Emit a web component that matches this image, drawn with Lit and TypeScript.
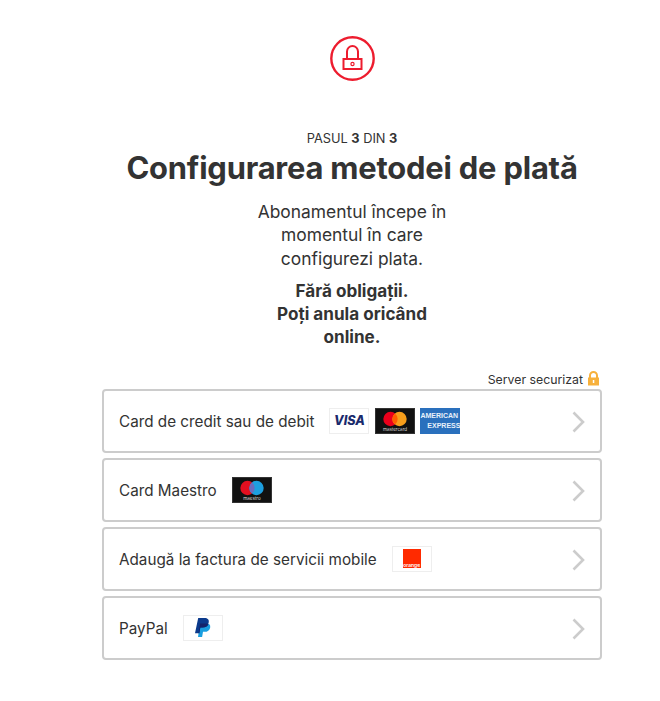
import { LitElement, html, css, svg } from 'lit';
import { customElement } from 'lit/decorators.js';

const logoVisa = html`<span class="logo light"><span class="visa">VISA</span></span>`;

const logoMastercard = html`<span class="logo dark">
  <svg width="38" height="24" viewBox="0 0 38 24">
    <circle cx="14.5" cy="10" r="7.2" fill="#eb001b"></circle>
    <circle cx="23.5" cy="10" r="7.2" fill="#f79e1b"></circle>
    <path d="M19 4.4a7.2 7.2 0 0 1 0 11.2a7.2 7.2 0 0 1 0-11.2z" fill="#ff5f00"></path>
    <text x="19" y="21.5" text-anchor="middle" class="tiny">mastercard</text>
  </svg>
</span>`;

const logoAmex = html`<span class="logo amex">
  <span class="amex-a">AMERICAN</span>
  <span class="amex-b">EXPRESS</span>
</span>`;

const logoMaestro = html`<span class="logo dark">
  <svg width="38" height="24" viewBox="0 0 38 24">
    <circle cx="14.5" cy="10" r="7.2" fill="#e30f20"></circle>
    <circle cx="23.5" cy="10" r="7.2" fill="#1d9fe0"></circle>
    <path d="M19 4.4a7.2 7.2 0 0 1 0 11.2a7.2 7.2 0 0 1 0-11.2z" fill="#6c6bbd"></path>
    <text x="19" y="21.5" text-anchor="middle" class="tiny">maestro</text>
  </svg>
</span>`;

const logoOrange = html`<span class="logo light">
  <span class="orange">orange</span>
</span>`;

const logoPaypal = html`<span class="logo light">
  <svg width="18" height="20" viewBox="0 0 18 20">
    <path d="M6 5.5h6.6c2.6 0 4.1 1.5 3.6 3.9c-.6 3-2.8 4.4-5.4 4.4H9l-.9 5.2H4z" fill="#1a9fe0"></path>
    <path d="M4.2 0h6.4c3 0 4.7 1.6 4.1 4.4c-.7 3.4-3.2 5-6.2 5H6.3l-1 5.8H1z" fill="#0b3a8c"></path>
    <path d="M6 5.5h5.8c1 0 1.9.2 2.6.7c-.7 2.2-3 3.2-5.9 3.2H6.3l-1 5.8H4.6z" fill="#15246b"></path>
  </svg>
</span>`;

const lockRed = svg`
  <circle cx="22.5" cy="22.5" r="21.2" fill="none" stroke="#ed1c2e" stroke-width="2.4"></circle>
  <path d="M17 23v-7.5a5.5 5.5 0 0 1 11 0V23" fill="none" stroke="#ed1c2e" stroke-width="2"></path>
  <rect x="13.5" y="23" width="18" height="10" fill="none" stroke="#ed1c2e" stroke-width="2"></rect>
  <circle cx="22.5" cy="28" r="1.6" fill="none" stroke="#ed1c2e" stroke-width="1.2"></circle>
`;

const rows = [
  { label: 'Card de credit sau de debit', logos: [logoVisa, logoMastercard, logoAmex] },
  { label: 'Card Maestro', logos: [logoMaestro] },
  { label: 'Adaugă la factura de servicii mobile', logos: [logoOrange] },
  { label: 'PayPal', logos: [logoPaypal] },
];

@customElement('app-root')
export class AppRoot extends LitElement {
  static styles = css`
    :host {
      display: block;
      height: 701px;
      background: #fff;
      color: #333;
      font-family: Inter, 'Liberation Sans', sans-serif;
      overflow: hidden;
    }
    .page {
      width: 500px;
      margin-left: 102px;
      padding-top: 36px;
    }
    .head {
      display: flex;
      flex-direction: column;
      align-items: center;
      text-align: center;
    }
    .lock {
      display: block;
      width: 45px;
      height: 45px;
    }
    .step {
      margin-top: 50px;
      font-size: 12.8px;
      line-height: 16px;
    }
    .step b {
      font-weight: 700;
    }
    h1 {
      margin: 2px 0 0;
      font-size: 30.9px;
      line-height: 38px;
      font-weight: 700;
      letter-spacing: -0.2px;
      white-space: nowrap;
    }
    .lead {
      width: 210px;
      margin-top: 13px;
      font-size: 17.4px;
      line-height: 23.3px;
    }
    .strong {
      width: 180px;
      margin-top: 9px;
      font-size: 17.1px;
      line-height: 23.3px;
      font-weight: 700;
    }
    .secure {
      display: flex;
      justify-content: flex-end;
      align-items: center;
      gap: 4px;
      height: 16px;
      margin-top: 23px;
      font-size: 12.3px;
    }
    .secure svg {
      margin: -3px 2px 0 0;
    }
    .list {
      display: flex;
      flex-direction: column;
      gap: 5px;
      margin-top: 1px;
    }
    .row {
      display: flex;
      align-items: center;
      box-sizing: border-box;
      height: 64px;
      padding-left: 15px;
      border: 2px solid #ccc;
      border-radius: 4px;
      font-size: 15.25px;
    }
    .label {
      padding-top: 2px;
    }
    .logos {
      display: flex;
      gap: 5.5px;
      margin-left: 15px;
    }
    .logo {
      display: flex;
      align-items: center;
      justify-content: center;
      box-sizing: border-box;
      width: 40px;
      height: 26px;
      overflow: hidden;
    }
    .light {
      border: 1px solid #eee;
      background: #fff;
    }
    .dark {
      background: #111;
      border: 1px solid #333;
    }
    .tiny {
      font-size: 4.5px;
      fill: #ddd;
    }
    .visa {
      color: #1a2a6c;
      font-size: 12.5px;
      font-weight: 800;
      font-style: italic;
    }
    .amex {
      flex-direction: column;
      align-items: stretch;
      background: #2a70bd;
      color: #e8f0fa;
      font-family: 'Liberation Sans', sans-serif;
      font-size: 7px;
      font-weight: 700;
      line-height: 10px;
      white-space: nowrap;
    }
    .amex-a {
      text-align: left;
    }
    .amex-b {
      text-align: right;
    }
    .orange {
      display: flex;
      align-items: flex-end;
      justify-content: center;
      width: 18px;
      height: 19px;
      background: #ff2a00;
      color: #fff;
      font-size: 5px;
      line-height: 6px;
      font-weight: 600;
    }
    .chevron {
      width: 13px;
      height: 22px;
      margin: 2px 15px 0 auto;
    }
  `;

  render() {
    return html`
      <div class="page">
        <div class="head">
          <svg class="lock" viewBox="0 0 45 45">${lockRed}</svg>
          <div class="step">PASUL <b>3</b> DIN <b>3</b></div>
          <h1>Configurarea metodei de plată</h1>
          <div class="lead">Abonamentul începe în momentul în care configurezi plata.</div>
          <div class="strong">Fără obligații.<br />Poți anula oricând online.</div>
        </div>
        <div class="secure">
          Server securizat
          <svg width="13" height="15" viewBox="0 0 13 15">
            <path d="M3 7V4.5a3.5 3.5 0 0 1 7 0V7" fill="none" stroke="#f7b13c" stroke-width="2"></path>
            <rect x="1" y="6.5" width="11" height="8" fill="#f7b13c"></rect>
            <rect x="5.8" y="9" width="1.5" height="3" fill="#fff"></rect>
          </svg>
        </div>
        <div class="list">
          ${rows.map(
            (row) => html`<div class="row">
              <span class="label">${row.label}</span>
              <span class="logos">${row.logos}</span>
              <svg class="chevron" viewBox="0 0 13 22">
                <path d="M1.5 1.5L11 11L1.5 20.5" fill="none" stroke="#ccc" stroke-width="2.6"></path>
              </svg>
            </div>`,
          )}
        </div>
      </div>
    `;
  }
}
